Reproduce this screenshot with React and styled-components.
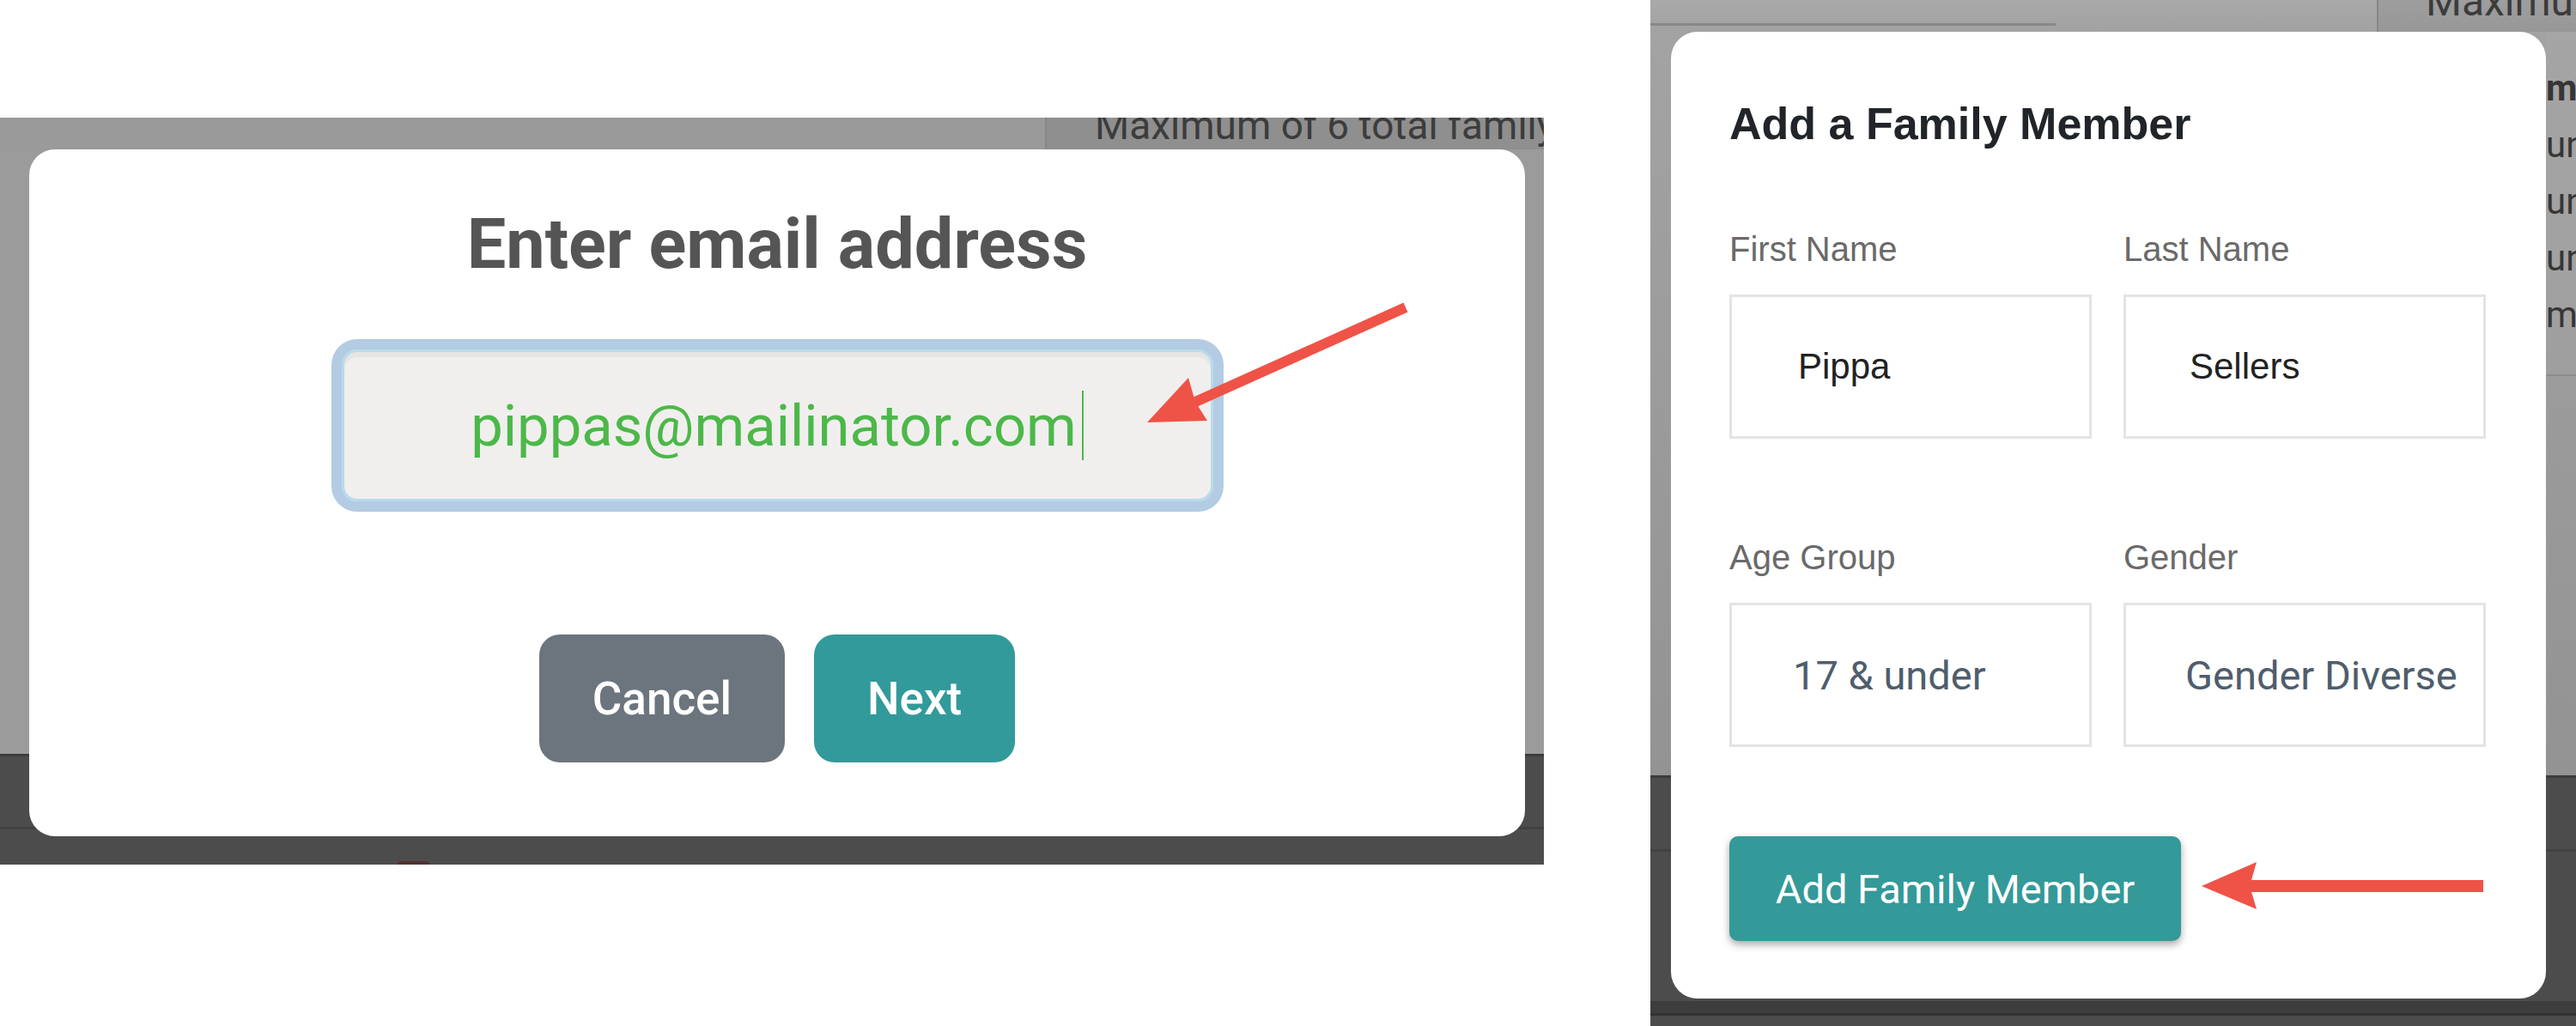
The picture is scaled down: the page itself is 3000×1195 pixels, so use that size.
import React from 'react'
import styled, { createGlobalStyle } from 'styled-components'

const GlobalStyle = createGlobalStyle`
  html, body {
    margin: 0;
    padding: 0;
    background: #ffffff;
    overflow: hidden;
  }
  * { box-sizing: border-box; }
`

const Page = styled.div`
  display: flex;
  width: 3000px;
  height: 1195px;
  font-family: Roboto, "Liberation Sans", sans-serif;
`

const LeftColumn = styled.div`
  width: 1798px;
  padding-top: 137px;
`

const Backdrop = styled.div`
  position: relative;
  display: flex;
  flex-direction: column;
  width: 100%;
  height: ${p => p.$height};
  overflow: hidden;
`

const TopStrip = styled.div`
  display: flex;
  height: 37px;
  flex-shrink: 0;
`

const StripCell = styled.div`
  width: ${p => p.$width || 'auto'};
  flex: ${p => (p.$width ? 'none' : '1')};
  background: ${p => p.$bg};
  border-left: ${p => (p.$divider ? '2px solid #868686' : 'none')};
  padding-left: ${p => p.$pad || '0px'};
  overflow: hidden;
  white-space: nowrap;
`

const StripLine = styled.div`
  width: ${p => p.$width};
  height: 3px;
  margin-top: 27px;
  background: #888888;
`

const BgText = styled.div`
  font-family: Roboto, sans-serif;
  font-size: ${p => p.$size};
  line-height: ${p => p.$size};
  margin-top: ${p => p.$shift};
  color: #3c3c3c;
`

const Shade = styled.div`
  flex: 1;
  display: flex;
  justify-content: flex-end;
  background: ${p => p.$bg};
`

const SideCard = styled.div`
  width: 35px;
  height: 401px;
  padding-top: 33px;
  overflow: hidden;
  border-bottom: 2px solid #8c8c8c;
  background: rgba(255, 255, 255, 0.03);
`

const SideLine = styled.div`
  font-family: Roboto, sans-serif;
  font-size: 42px;
  line-height: 66px;
  font-weight: ${p => (p.$bold ? 700 : 400)};
  color: #363636;
  white-space: nowrap;
`

const DarkBand = styled.div`
  height: ${p => p.$height};
  flex-shrink: 0;
  display: flex;
  flex-direction: column;
  background: #4c4c4c;
  border-top: 3px solid #3c3c3c;
`

const BandLine = styled.div`
  margin-top: ${p => p.$top};
  height: 3px;
  background: #414141;
`

const BandStripe = styled.div`
  margin-top: auto;
  height: 17px;
  background: #3d3d3d;
  border-bottom: 3px solid #333333;
`

const BandFoot = styled.div`
  height: 12px;
`

const RedPeek = styled.div`
  margin-top: auto;
  margin-left: 463px;
  width: 37px;
  height: 4px;
  border-radius: 18px 18px 0 0;
  background: #553030;
`

/* left dialog */

const EmailModal = styled.div`
  position: absolute;
  left: 34px;
  top: 37px;
  width: 1742px;
  height: 800px;
  padding-top: 71px;
  display: flex;
  flex-direction: column;
  align-items: center;
  background: #ffffff;
  border-radius: 30px;
`

const EmailTitle = styled.h2`
  margin: 0;
  font-family: Roboto, sans-serif;
  font-weight: 700;
  font-size: 81px;
  line-height: 80px;
  color: #555555;
`

const EmailField = styled.div`
  margin-top: 70px;
  width: 1039px;
  height: 201px;
  flex-shrink: 0;
  display: flex;
  align-items: center;
  justify-content: center;
  border: 12px solid #b3cbe3;
  border-radius: 30px;
  background: #f0efee;
  box-shadow: inset 0 0 0 3px #b8dbeb, inset 0 6px 0 3px #e6e5e4;
  font-family: Roboto, sans-serif;
  font-size: 67px;
  color: #4cb849;
`

const Caret = styled.span`
  display: inline-block;
  width: 2px;
  height: 81px;
  margin-left: 6px;
  background: #4cb849;
`

const ButtonRow = styled.div`
  margin-top: 143px;
  display: flex;
  gap: 34px;
`

const PillButton = styled.button`
  height: 149px;
  padding: 0 62px;
  border: none;
  border-radius: 24px;
  background: ${p => p.$bg};
  color: #ffffff;
  font-family: Roboto, sans-serif;
  font-weight: 500;
  font-size: 53px;
`

const ArrowSvg = styled.svg`
  position: absolute;
  left: ${p => p.$left};
  top: ${p => p.$top};
  overflow: visible;
`

/* right dialog */

const RightPanel = styled.div`
  margin-left: 124px;
  width: 1078px;
  height: 1195px;
`

const MemberModal = styled.div`
  position: absolute;
  left: 24px;
  top: 37px;
  width: 1019px;
  height: 1126px;
  padding: 81px 0 0 68px;
  background: #ffffff;
  border-radius: 31px;
`

const MemberTitle = styled.h2`
  margin: 0;
  font-family: "Liberation Sans", Arial, sans-serif;
  font-weight: 700;
  font-size: 52px;
  line-height: 52px;
  color: #212529;
`

const FieldGrid = styled.div`
  margin-top: 100px;
  display: grid;
  grid-template-columns: 422px 422px;
  column-gap: 37px;
  row-gap: 118px;
`

const Field = styled.div`
  display: flex;
  flex-direction: column;
  gap: 33px;
`

const FieldLabel = styled.label`
  font-family: "Liberation Sans", Arial, sans-serif;
  font-size: 40px;
  line-height: 40px;
  color: #6a6a6a;
`

const FieldBox = styled.div`
  height: 168px;
  display: flex;
  align-items: center;
  padding-left: ${p => p.$pad};
  border: 3px solid #e3e4e6;
  font-family: ${p => (p.$select ? 'Roboto, sans-serif' : '"Liberation Sans", Arial, sans-serif')};
  font-size: ${p => (p.$select ? '47px' : '42px')};
  color: ${p => (p.$select ? '#4f5d6d' : '#222222')};
  white-space: nowrap;
`

const SubmitButton = styled.button`
  margin-top: 104px;
  width: 526px;
  height: 122px;
  border: none;
  border-radius: 10px;
  background: #349999;
  box-shadow: 0 4px 10px rgba(0, 0, 0, 0.35);
  color: #ffffff;
  font-family: Roboto, sans-serif;
  font-size: 47px;
`

const fields = [
  { label: 'First Name', value: 'Pippa', pad: '77px' },
  { label: 'Last Name', value: 'Sellers', pad: '74px' },
  { label: 'Age Group', value: '17 & under', pad: '71px', select: true },
  { label: 'Gender', value: 'Gender Diverse', pad: '69px', select: true },
]

const ARROW = '#ef5347'

const App = () => {
  return (
    <Page>
      <GlobalStyle />
      <LeftColumn>
        <Backdrop $height="870px">
          <TopStrip>
            <StripCell $width="1217px" $bg="#9a9a9a" />
            <StripCell $bg="#8f8f8f" $divider $pad="56px">
              <BgText $size="46px" $shift="-14px">Maximum of 6 total family members</BgText>
            </StripCell>
          </TopStrip>
          <Shade $bg="#9b9b9b" />
          <DarkBand $height="129px">
            <BandLine $top="82px" />
            <RedPeek />
          </DarkBand>

          <EmailModal>
            <EmailTitle>Enter email address</EmailTitle>
            <EmailField>
              pippas@mailinator.com
              <Caret />
            </EmailField>
            <ButtonRow>
              <PillButton $bg="#6c757d">Cancel</PillButton>
              <PillButton $bg="#329a9a">Next</PillButton>
            </ButtonRow>
          </EmailModal>

          <ArrowSvg $left="1320px" $top="213px" width="330" height="290" viewBox="0 0 330 290">
            <line x1="317" y1="8" x2="70" y2="119" stroke={ARROW} strokeWidth="12" />
            <polygon points="16,142 64,90 72,118 86,140" fill={ARROW} />
          </ArrowSvg>
        </Backdrop>
      </LeftColumn>

      <RightPanel>
        <Backdrop $height="1195px">
          <TopStrip>
            <StripCell $width="846px" $bg="linear-gradient(180deg, #a9a9a9, #a2a2a2)">
              <StripLine $width="472px" />
            </StripCell>
            <StripCell $bg="linear-gradient(180deg, #9e9e9e, #979797)" $divider $pad="55px">
              <BgText $size="48px" $shift="-22px">Maximum of 6 total</BgText>
            </StripCell>
          </TopStrip>
          <Shade $bg="linear-gradient(180deg, #a3a3a3, #939393)">
            <SideCard>
              <SideLine $bold>m</SideLine>
              <SideLine>un</SideLine>
              <SideLine>un</SideLine>
              <SideLine>un</SideLine>
              <SideLine>m</SideLine>
            </SideCard>
          </Shade>
          <DarkBand $height="292px">
            <BandLine $top="83px" />
            <BandStripe />
            <BandFoot />
          </DarkBand>

          <MemberModal>
            <MemberTitle>Add a Family Member</MemberTitle>
            <FieldGrid>
              {fields.map(f => (
                <Field key={f.label}>
                  <FieldLabel>{f.label}</FieldLabel>
                  <FieldBox $pad={f.pad} $select={f.select}>{f.value}</FieldBox>
                </Field>
              ))}
            </FieldGrid>
            <SubmitButton>Add Family Member</SubmitButton>
          </MemberModal>

          <ArrowSvg $left="630px" $top="995px" width="345" height="75" viewBox="0 0 345 75">
            <rect x="64" y="30" width="276" height="14" fill={ARROW} />
            <polygon points="12,37 76,9 68,37 76,64" fill={ARROW} />
          </ArrowSvg>
        </Backdrop>
      </RightPanel>
    </Page>
  )
}

export default App
